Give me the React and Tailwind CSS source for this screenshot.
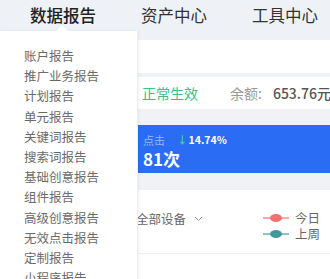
import React from 'react';

const font = { fontFamily: '"Noto Sans CJK SC", "Noto Sans", sans-serif' };

const menuItems = [
  '账户报告',
  '推广业务报告',
  '计划报告',
  '单元报告',
  '关键词报告',
  '搜索词报告',
  '基础创意报告',
  '组件报告',
  '高级创意报告',
  '无效点击报告',
  '定制报告',
  '小程序报告',
];

const navItems = ['数据报告', '资产中心', '工具中心'];

const LegendDot = ({ color }) => (
  <svg width="26" height="10" viewBox="0 0 26 10">
    <line x1="0" y1="5" x2="26" y2="5" stroke={color} strokeWidth="1.2" />
    <ellipse cx="13" cy="5" rx="6" ry="4" fill={color} />
  </svg>
);

const App = () => {
  return (
    <div className="relative w-[330px] h-[279px] overflow-hidden bg-[#f0f2f5]" style={font}>
      {/* top nav */}
      <div className="h-[40px] bg-[#eef1f6] flex items-start pl-[30px] gap-[45px]">
        {navItems.map((item, i) => (
          <div key={item} className="relative pt-[3px]">
            <span className={`text-[16.5px] leading-[22px] whitespace-nowrap ${i === 0 ? 'text-[#222] font-medium' : 'text-[#333]'}`}>
              {item}
            </span>
            {i === 0 && <div className="absolute left-[-1px] right-[-1px] top-[31px] h-[2px] bg-[#333]" />}
          </div>
        ))}
      </div>

      {/* page body */}
      <div className="flex flex-col">
        <div className="h-[37px] bg-white border-b-[4px] border-[#f0f2f5]" />
        <div className="h-[32px] bg-white flex items-center pl-[142px] text-[14px] whitespace-nowrap">
          <span className="text-[#3dbd8a]">正常生效</span>
          <span className="ml-[32px] text-[#999]">余额:</span>
          <span className="ml-[11px] text-[#555] font-medium">653.76元</span>
        </div>
        <div className="h-[16px]" />
        <div className="h-[48px] bg-[#2a6cf4] ml-[138px] pl-[5px] pt-[8px] text-white">
          <div className="flex items-center gap-[12px] leading-[14px]">
            <span className="text-[11px] text-[#9bb8ff]">点击</span>
            <span className="text-[10.5px] font-bold flex items-center">
              <span className="text-[#3fd18c] mr-[1px]">↓</span>14.74%
            </span>
          </div>
          <div className="text-[17px] font-bold leading-[22px] mt-[1px]">81次</div>
        </div>
        <div className="h-[17px]" />
        <div className="bg-white h-[100px] flex flex-col">
          <div className="h-[63px] flex items-start pt-[20px] pl-[136px] pr-[10px] justify-between">
            <div className="flex items-center text-[12.5px] text-[#666] whitespace-nowrap">
              全部设备
              <svg className="ml-[8px]" width="9" height="6" viewBox="0 0 9 6">
                <path d="M1 1l3.5 3.5L8 1" fill="none" stroke="#999" strokeWidth="1" />
              </svg>
            </div>
            <div className="flex flex-col text-[12.5px] text-[#666] leading-[16px]">
              <div className="flex items-center gap-[6px]">
                <LegendDot color="#f2706e" />
                今日
              </div>
              <div className="flex items-center gap-[6px]">
                <LegendDot color="#3f9b9b" />
                上周
              </div>
            </div>
          </div>
          <div className="h-px bg-[#f0f1f3]" />
        </div>
      </div>

      {/* dropdown menu */}
      <div className="absolute left-0 top-[31px] w-[138px] h-[260px] bg-white border-r border-[#eceef2] shadow-[1px_0_3px_rgba(0,0,0,0.06)] pt-[15px]">
        <div className="absolute left-[58px] top-[-4px] w-[8px] h-[8px] bg-white rotate-45" />
        {menuItems.map((m) => (
          <div key={m} className="pl-[24px] text-[12.5px] leading-[20.2px] text-[#6a6a6a] whitespace-nowrap">
            {m}
          </div>
        ))}
      </div>
    </div>
  );
};

export default App;
